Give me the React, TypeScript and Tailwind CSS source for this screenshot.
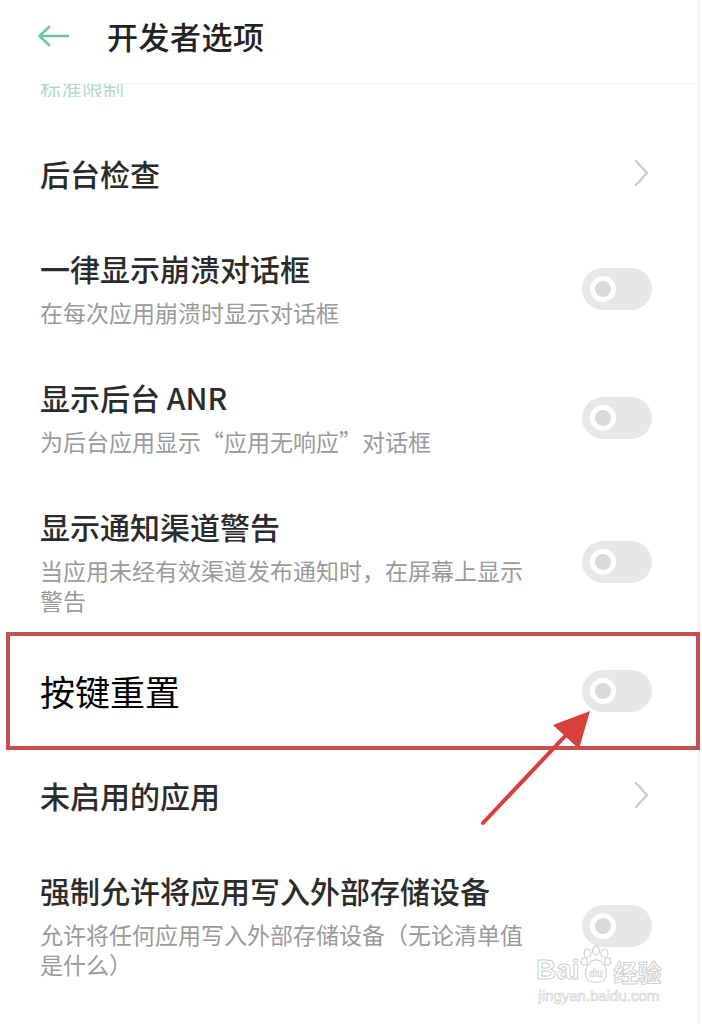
import React from 'react'

const font = { fontFamily: '"Noto Sans CJK SC", "Noto Sans", sans-serif' }

function Toggle() {
  return (
    <div className="w-[70px] h-[42px] rounded-full bg-[#e7e7e7] flex items-center pl-[8px] shrink-0">
      <div className="w-[26px] h-[26px] rounded-full border-[5px] border-white bg-[#dadada]" />
    </div>
  )
}

function Chevron() {
  return (
    <svg width="16" height="28" viewBox="0 0 16 28" className="shrink-0">
      <path d="M2 2 L13 14 L2 26" fill="none" stroke="#cccccc" strokeWidth="2.4" strokeLinecap="round" strokeLinejoin="round" />
    </svg>
  )
}

function Row({ title, sub, toggle, className = '' }: { title: string; sub?: string[]; toggle?: boolean; className?: string }) {
  return (
    <div className={`flex items-center pl-[40px] pr-[46px] ${className}`}>
      <div className="flex-1">
        <div className="text-[30px] leading-[36px] text-[#2b2b2b] font-medium">{title}</div>
        {sub && (
          <div className="mt-[11px] text-[23px] leading-[30px] text-[#9a9a9a] whitespace-nowrap">
            {sub.map((s) => (
              <div key={s}>{s}</div>
            ))}
          </div>
        )}
      </div>
      {toggle ? <Toggle /> : <div className="mr-[2px]"><Chevron /></div>}
    </div>
  )
}

export default function App() {
  return (
    <div className="w-[702px] h-[1024px] bg-white relative overflow-hidden" style={font}>
      <div className="w-[700px] h-full border-r-2 border-[#f1f1f1] flex flex-col">
        {/* 顶部标题栏 */}
        <div className="h-[72px] flex items-center pl-[36px] shrink-0">
          <svg width="34" height="24" viewBox="0 0 34 24">
            <path d="M32 12 H4 M13 3 L3.5 12 L13 21" fill="none" stroke="#6cc8a6" strokeWidth="2.6" strokeLinecap="round" strokeLinejoin="round" />
          </svg>
          <div className="ml-[37px] text-[31px] font-medium text-[#222] tracking-[0.5px]">开发者选项</div>
        </div>
        <div className="h-[11px] shrink-0" />
        <div className="h-[14px] overflow-hidden shrink-0 relative border-t border-[#f4f4f4] ml-[40px]">
          <div className="absolute left-0 top-[-11px] text-[21px] leading-[30px] text-[#b3dacd]">标准限制</div>
        </div>

        <Row title="后台检查" className="mt-[58px]" />
        <Row title="一律显示崩溃对话框" sub={['在每次应用崩溃时显示对话框']} toggle className="mt-[59px]" />
        <Row title="显示后台 ANR" sub={['为后台应用显示“应用无响应”对话框']} toggle className="mt-[52px]" />
        <Row
          title="显示通知渠道警告"
          sub={['当应用未经有效渠道发布通知时，在屏幕上显示', '警告']}
          toggle
          className="mt-[52px]"
        />

        {/* 标注框 */}
        <div className="mt-[17px] ml-[6px] mr-[-2px] h-[118px] border-4 border-[#c4504f] flex items-center pl-[30px] pr-[44px]">
          <div className="flex-1 text-[35px] leading-[40px] text-black">按键重置</div>
          <Toggle />
        </div>

        <Row title="未启用的应用" className="mt-[27px]" />
        <Row
          title="强制允许将应用写入外部存储设备"
          sub={['允许将任何应用写入外部存储设备（无论清单值', '是什么）']}
          toggle
          className="mt-[59px]"
        />
      </div>

      {/* 红色箭头 */}
      <svg className="absolute left-0 top-0 pointer-events-none" width="702" height="1024">
        <line x1="483" y1="823" x2="568" y2="733" stroke="#d8403b" strokeWidth="4" strokeLinecap="round" />
        <polygon points="590,711 579,749 553,725" fill="#d8403b" />
      </svg>

      {/* 水印 */}
      <div className="absolute left-[536px] top-[946px] flex flex-col items-center text-transparent [-webkit-text-stroke:1px_#d0d0d0]" style={{ fontFamily: '"Liberation Sans", "Noto Sans CJK SC", sans-serif' }}>
        <div className="flex items-end leading-none">
          <span className="text-[28px] font-bold">Bai</span>
          <svg width="32" height="38" viewBox="0 0 38 44">
            <g fill="none" stroke="#d0d0d0" strokeWidth="1.4">
              <ellipse cx="9" cy="8" rx="4" ry="5" />
              <ellipse cx="19" cy="5" rx="4" ry="5" />
              <ellipse cx="29" cy="8" rx="4" ry="5" />
              <ellipse cx="5" cy="18" rx="3.5" ry="4.5" />
              <ellipse cx="33" cy="18" rx="3.5" ry="4.5" />
              <path d="M19 16 C10 16 4 30 8 38 C12 44 26 44 30 38 C34 30 28 16 19 16 Z" />
            </g>
            <text x="19" y="36" textAnchor="middle" fontSize="14" fill="none" stroke="#d0d0d0" strokeWidth="0.8" fontFamily="Liberation Sans, sans-serif" fontWeight="bold">du</text>
          </svg>
          <span className="text-[24px] font-bold ml-[2px]" style={{ fontFamily: '"Noto Sans CJK SC", sans-serif' }}>经验</span>
        </div>
        <div className="text-[15px] leading-[18px] mt-[3px] [-webkit-text-stroke:0.7px_#d4d4d4]">jingyan.baidu.com</div>
      </div>
    </div>
  )
}
